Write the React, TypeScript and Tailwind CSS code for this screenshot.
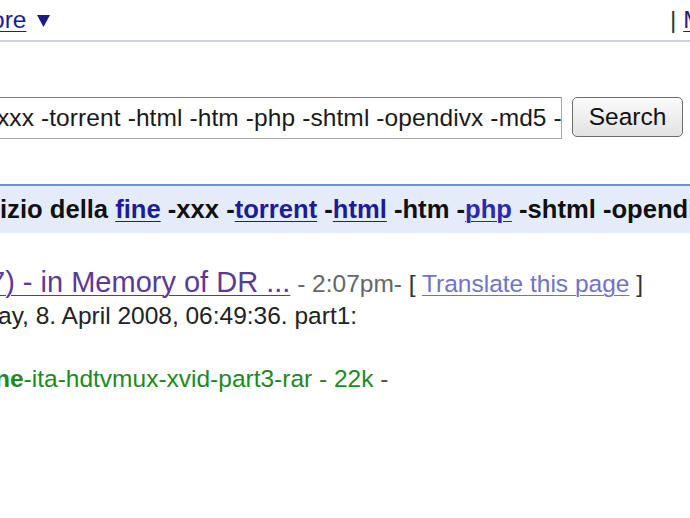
export default function App() {
  return (
    <div className="h-[518px] w-[690px] overflow-hidden bg-white font-['Liberation_Sans',Arial,sans-serif] text-[24.5px] leading-[28px] text-[#222]">
      {/* top bar */}
      <div className="flex h-[40px] items-start pt-[6px] whitespace-nowrap">
        <div className="flex w-[670px] shrink-0 items-center">
          <a className="-ml-[9px] text-[#1c1c8f] underline decoration-1 underline-offset-[3px]">ore</a>
          <svg className="ml-[11px] mt-[2px]" width="13" height="12" viewBox="0 0 13 12">
            <polygon points="0,0 13,0 6.5,12" fill="#1a1a8a" />
          </svg>
        </div>
        <div className="shrink-0">
          <span className="text-[#333]">| </span>
          <a className="text-[#2a1a7a] underline decoration-1 underline-offset-[3px]">My Account</a>
        </div>
      </div>
      <div className="h-[2px] bg-[#cdd2da]" />

      {/* search row */}
      <div className="mt-[55px] flex items-start">
        <div className="-ml-[20px] flex h-[42px] w-[582px] shrink-0 items-center overflow-hidden border border-[#a5a9ae] border-t-[#7d8186] pl-[16px] whitespace-nowrap tracking-[0.1px] text-[#1a1a1a]">
          xxx -torrent -html -htm -php -shtml -opendivx -md5 -mp3 -rar
        </div>
        <button className="ml-[10px] flex h-[40px] w-[111px] shrink-0 items-center justify-center rounded-[5px] border border-[#6d6d6d] bg-gradient-to-b from-[#fbfbfb] to-[#e2e2e2] text-[#111]">
          Search
        </button>
      </div>

      {/* results bar */}
      <div className="mt-[45px] h-[49px] border-t-2 border-[#6b90da] bg-[#e5ecf9] pt-[9px] whitespace-nowrap text-[25.6px] font-bold text-[#111]">
        izio della <a className="text-[#1c1c9a] underline decoration-1 underline-offset-[3px]">fine</a> -xxx -
        <a className="text-[#1c1c9a] underline decoration-1 underline-offset-[3px]">torrent</a> -
        <a className="text-[#1c1c9a] underline decoration-1 underline-offset-[3px]">html</a> -htm -
        <a className="text-[#2a2aac] underline decoration-1 underline-offset-[3px]">php</a> -shtml -opendivx -md5
      </div>

      {/* result */}
      <div className="mt-[32px] whitespace-nowrap">
        <div className="-ml-[11px] leading-[34px]">
          <a className="text-[29px] text-[#5b3b92] underline decoration-1 underline-offset-[3px]">7) - in Memory of DR ...</a>
          <span className="text-[#666]"> - 2:07pm- </span>
          <span className="text-[#333]">[ </span>
          <a className="text-[#7272c4] underline decoration-1 underline-offset-[3px]">Translate this page</a>
          <span className="text-[#333]"> ]</span>
        </div>
        <div className="-ml-[2px] mt-[1px] text-[#222]">ay, 8. April 2008, 06:49:36. part1:</div>
        <div className="-ml-[5px] mt-[35px]">
          <span className="text-[#1e8a1e]">
            <b>ne</b>-ita-hdtvmux-xvid-part3-rar - 22k
          </span>
          <span className="text-[#555]"> -</span>
        </div>
      </div>
    </div>
  );
}
